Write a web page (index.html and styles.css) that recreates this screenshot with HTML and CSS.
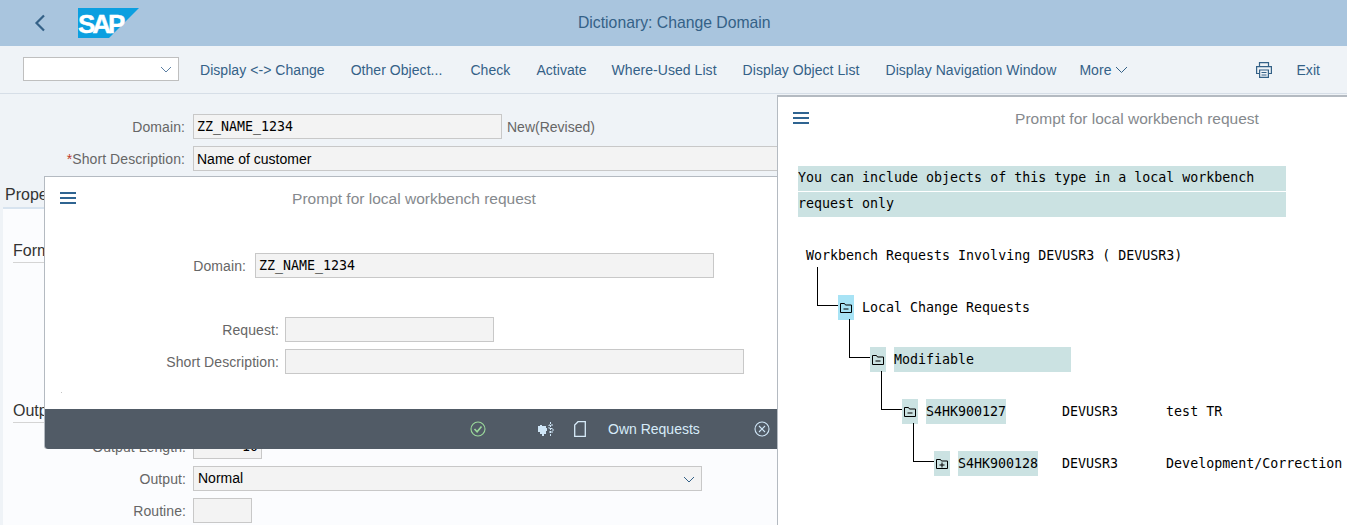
FILE: index.html
```html
<!DOCTYPE html>
<html lang="en">
<head>
    <meta charset="UTF-8">
    <meta name="viewport" content="width=device-width, initial-scale=1.0">
    <title>Dictionary: Change Domain</title>
    <link rel="stylesheet" href="styles.css">
</head>
<body>
    <header class="shell-bar">
        <svg class="back-icon" width="12" height="18" viewBox="0 0 12 18"><path d="M10 1.5 2.5 9l7.5 7.5" fill="none" stroke="#346187" stroke-width="2.2"/></svg>
        <svg class="sap-logo" width="61" height="30" viewBox="0 0 61 30">
            <polygon points="0,0 61,0 31,30 0,30" fill="#0b9fe0"/>
            <text x="0" y="25" class="sap-text">SAP</text>
        </svg>
        <div class="shell-title">Dictionary: Change Domain</div>
    </header>

    <nav class="toolbar">
        <div class="select toolbar-select">
            <svg class="chevron" width="12" height="7" viewBox="0 0 12 7"><path d="M1 1l5 5 5-5" fill="none" stroke="#5b7fa3" stroke-width="1"/></svg>
        </div>
        <a class="tool first">Display &lt;-&gt; Change</a>
        <a class="tool">Other Object...</a>
        <a class="tool tool-check">Check</a>
        <a class="tool">Activate</a>
        <a class="tool tool-where">Where-Used List</a>
        <a class="tool">Display Object List</a>
        <a class="tool">Display Navigation Window</a>
        <a class="tool more">More
            <svg width="13" height="8" viewBox="0 0 13 8"><path d="M1 1l5.5 5.5L12 1" fill="none" stroke="#346187" stroke-width="1"/></svg>
        </a>
        <svg class="print-icon" width="16" height="16" viewBox="0 0 16 16" fill="none" stroke="#346187" stroke-width="1.2">
            <path d="M3.5 4.5V.6h9v3.9"/>
            <path d="M3.5 11.5H.6V4.6h14.8v6.9h-2.9"/>
            <path d="M3.6 8h8.8v7.4H3.6z"/>
            <path d="M5.5 10.5h5M5.5 13h5"/>
        </svg>
        <a class="tool exit">Exit</a>
    </nav>

    <main class="page">
        <div class="form-row top-row first-row">
            <label class="label">Domain:</label>
            <div class="field mono domain-field">ZZ_NAME_1234</div>
            <span class="status">New(Revised)</span>
        </div>
        <div class="form-row top-row">
            <label class="label"><span class="req">*</span>Short Description:</label>
            <div class="field desc-field">Name of customer</div>
        </div>

        <div class="tab">Properties</div>
        <section class="panel">
            <h2 class="group format-group">Format</h2>
            <h2 class="group output-group">Output Characteristics</h2>
            <div class="form-row">
                <label class="label">Output Length:</label>
                <div class="field mono length-field">10</div>
            </div>
            <div class="form-row">
                <label class="label">Output:</label>
                <div class="field output-field">Normal
                    <svg class="chevron" width="12" height="7" viewBox="0 0 12 7"><path d="M1 1l5 5 5-5" fill="none" stroke="#346187" stroke-width="1"/></svg>
                </div>
            </div>
            <div class="form-row">
                <label class="label">Routine:</label>
                <div class="field routine-field"></div>
            </div>
        </section>
    </main>

    <!-- left popup -->
    <section class="dialog dialog-domain">
        <div class="dialog-head">
            <svg class="menu-icon" width="16" height="12" viewBox="0 0 16 12"><path d="M0 1h16M0 6h16M0 11h16" stroke="#2f6491" stroke-width="2"/></svg>
            <div class="dialog-title">Prompt for local workbench request</div>
        </div>
        <div class="dialog-form">
            <div class="dialog-row row-domain">
                <label class="label">Domain:</label>
                <div class="field mono">ZZ_NAME_1234</div>
            </div>
            <div class="dialog-row row-request">
                <label class="label">Request:</label>
                <div class="field"></div>
            </div>
            <div class="dialog-row row-short">
                <label class="label">Short Description:</label>
                <div class="field"></div>
            </div>
            <i class="speck"></i>
        </div>
        <footer class="dialog-foot">
            <svg class="foot-check" width="16" height="16" viewBox="0 0 16 16" fill="none" stroke="#9bd99b" stroke-width="1.1"><circle cx="8" cy="8" r="7"/><path d="M4.5 8l2.6 2.8 4.4-5.4" stroke-width="1.6"/></svg>
            <svg class="foot-tool" width="16" height="15" viewBox="0 0 16 15"><path d="M0 4h2V3h2v1h4v2h1v3H8v3H6v2H4v-2H2v-2H0z" fill="#cfe6f7"/><path d="M12.5 0v14M15 3h-4v3.5h4V10h-4" fill="none" stroke="#cfe6f7" stroke-width="1" stroke-dasharray="2 1"/></svg>
            <svg class="foot-doc" width="12" height="16" viewBox="0 0 12 16"><path d="M4 .7h7.3v14.6H.7V4z" fill="none" stroke="#d7ebf9" stroke-width="1.3"/></svg>
            <span class="foot-label">Own Requests</span>
            <svg class="foot-close" width="16" height="16" viewBox="0 0 16 16" fill="none" stroke="#cfe6f7" stroke-width="1.1"><circle cx="8" cy="8" r="7"/><path d="M5 5l6 6M11 5l-6 6"/></svg>
        </footer>
    </section>

    <!-- right popup -->
    <section class="dialog dialog-request">
        <div class="dialog-head">
            <svg class="menu-icon" width="16" height="12" viewBox="0 0 16 12"><path d="M0 1h16M0 6h16M0 11h16" stroke="#2f6491" stroke-width="2"/></svg>
            <div class="dialog-title">Prompt for local workbench request</div>
        </div>
        <div class="list mono">
            <div class="message">You can include objects of this type in a local workbench</div>
            <div class="message">request only</div>

            <div class="tree-row tree-root">Workbench Requests Involving DEVUSR3 ( DEVUSR3)</div>

            <div class="tree-row level-1">
                <span class="node node-active">
                    <i class="elbow"></i>
                    <svg width="12" height="10" viewBox="0 0 12 10" fill="none" stroke="#000"><path d="M.5 9.5v-9h4l1 1.5h6v7.5zM3.5 6h5"/></svg>
                </span>
                <span class="node-text">Local Change Requests</span>
            </div>
            <div class="tree-row level-2">
                <span class="node">
                    <i class="elbow"></i>
                    <svg width="12" height="10" viewBox="0 0 12 10" fill="none" stroke="#000"><path d="M.5 9.5v-9h4l1 1.5h6v7.5zM3.5 6h5"/></svg>
                </span>
                <span class="node-text hl wide">Modifiable</span>
            </div>
            <div class="tree-row level-3">
                <span class="node">
                    <i class="elbow"></i>
                    <svg width="12" height="10" viewBox="0 0 12 10" fill="none" stroke="#000"><path d="M.5 9.5v-9h4l1 1.5h6v7.5zM3.5 6h5"/></svg>
                </span>
                <span class="node-text hl">S4HK900127</span>
                <span class="owner owner-3">DEVUSR3</span>
                <span class="req-text">test TR</span>
            </div>
            <div class="tree-row level-4">
                <span class="node">
                    <i class="elbow"></i>
                    <svg width="12" height="10" viewBox="0 0 12 10" fill="none" stroke="#000"><path d="M.5 9.5v-9h4l1 1.5h6v7.5zM3.5 6h5M6 3.5v5"/></svg>
                </span>
                <span class="node-text hl">S4HK900128</span>
                <span class="owner owner-4">DEVUSR3</span>
                <span class="req-text">Development/Correction</span>
            </div>
        </div>
    </section>
</body>
</html>
```
FILE: styles.css
```css
html, body {
    height: 525px;
    overflow: hidden;
}
body {
    font-family: "Liberation Sans", Arial, sans-serif;
    font-size: 14px;
    background-color: #eff3f7;
    color: #333;
    margin: 0;
    position: relative;
}
.mono {
    font-family: "DejaVu Sans Mono", monospace;
    font-size: 13.3px;
    color: #000;
}

/* shell header */
.shell-bar {
    height: 46px;
    background-color: #a9c5de;
    display: flex;
    align-items: center;
    position: relative;
}
.back-icon {
    margin-left: 34px;
}
.sap-logo {
    margin-left: 32px;
}
.sap-text {
    font-family: "Liberation Sans", Arial, sans-serif;
    font-weight: bold;
    font-size: 26px;
    letter-spacing: -3px;
    fill: #fff;
    stroke: #fff;
    stroke-width: 0.4px;
}
.shell-title {
    margin-left: 439px;
    font-size: 15.75px;
    color: #346187;
}

/* toolbar */
.toolbar {
    height: 47px;
    border-bottom: 1px solid #d6dee7;
    display: flex;
    align-items: center;
    padding-left: 23px;
    padding-right: 27px;
    box-sizing: content-box;
}
.select {
    background-color: #fff;
    border: 1px solid #bfbfbf;
    box-sizing: border-box;
    position: relative;
}
.toolbar-select {
    width: 156px;
    height: 24px;
    margin-bottom: 2px;
}
.chevron {
    position: absolute;
    right: 6px;
    top: 50%;
    margin-top: -3px;
}
.tool {
    color: #346187;
    margin-left: 26px;
    white-space: nowrap;
    letter-spacing: 0.05px;
}
.tool.first {
    margin-left: 21px;
}
.tool.tool-check {
    margin-left: 28px;
}
.tool.tool-where {
    margin-left: 25px;
}
.tool.more {
    margin-left: 23px;
    display: flex;
    align-items: center;
    gap: 4px;
}
.print-icon {
    margin-left: auto;
}
.tool.exit {
    margin-left: 24px;
}

/* page behind the popups */
.page {
    padding-top: 20px;
}
.form-row {
    display: flex;
    align-items: center;
    height: 25px;
    margin-bottom: 7px;
}
.label {
    color: #666;
    text-align: right;
    white-space: nowrap;
    letter-spacing: 0.08px;
}
.form-row .label {
    width: 185px;
    margin-right: 8px;
}
.req {
    color: #c0392b;
}
.field {
    height: 25px;
    line-height: 23px;
    box-sizing: border-box;
    border: 1px solid #c8c8c8;
    background-color: #f3f3f3;
    padding: 0 3px;
    color: #000;
    position: relative;
}
.domain-field {
    width: 309px;
}
.status {
    margin-left: 5px;
    color: #666;
}
.desc-field {
    width: 700px;
    line-height: 25px;
}
.tab {
    margin: 13px 0 0 5px;
    width: 100px;
    height: 23px;
    font-size: 16px;
    line-height: 22px;
}
.panel {
    margin-left: 3px;
    padding-top: 31px;
    height: 320px;
    box-sizing: border-box;
    background-color: #fbfcfe;
    border-top: 2px solid #d7e3ef;
}
.group {
    font-size: 16px;
    font-weight: normal;
    margin: 0 0 0 10px;
    height: 22px;
    line-height: 22px;
    width: 400px;
    border-bottom: 1px solid #d4d4d4;
    box-sizing: content-box;
}
.format-group {
    margin-bottom: 137px;
}
.output-group {
    margin-bottom: 11px;
}
.panel .label {
    width: 183px;
    margin-right: 7px;
}
.length-field {
    width: 69px;
    text-align: right;
}
.output-field {
    width: 509px;
    font-size: 14px;
    padding-left: 4px;
}
.routine-field {
    width: 59px;
}

/* popups, placed like windows on a desktop */
.dialog {
    position: absolute;
    background-color: #fff;
    box-sizing: border-box;
}
.dialog-domain {
    left: 44px;
    top: 176px;
    width: 734px;
    height: 273px;
    border-left: 1px solid #b4bac1;
    border-top: 1px solid #b4bac1;
    display: flex;
    flex-direction: column;
    border-bottom-left-radius: 3px;
}
.dialog-request {
    left: 777px;
    top: 95px;
    width: 570px;
    height: 430px;
    border-left: 1px solid #b4bac1;
    border-top: 2px solid #b4bac1;
}
.dialog-head {
    height: 44px;
    display: flex;
    align-items: center;
    justify-content: center;
    position: relative;
}
.menu-icon {
    position: absolute;
    left: 15px;
    top: 15px;
}
.dialog-title {
    font-size: 15.5px;
    color: #85898d;
}
.dialog-domain .dialog-title {
    margin-left: 5px;
}
.dialog-request .dialog-title {
    margin-left: 149px;
}

/* left popup form */
.dialog-form {
    flex: 1;
    padding-top: 32px;
    position: relative;
}
.speck {
    position: absolute;
    left: 16px;
    bottom: 16px;
    width: 1px;
    height: 1px;
    background-color: #c4c4c4;
}
.dialog-row {
    display: flex;
    align-items: center;
    height: 25px;
}
.row-domain .label {
    width: 201px;
    margin-right: 9px;
}
.row-domain .field {
    width: 459px;
}
.row-request {
    margin-top: 39px;
}
.row-short {
    margin-top: 7px;
}
.row-request .label,
.row-short .label {
    width: 234px;
    margin-right: 6px;
}
.row-request .field {
    width: 209px;
}
.row-short .field {
    width: 459px;
}
.dialog-foot {
    height: 40px;
    background-color: #515b66;
    display: flex;
    align-items: center;
    padding-left: 425px;
    border-bottom-left-radius: 3px;
}
.foot-tool {
    margin-left: 52px;
}
.foot-doc {
    margin-left: 20px;
}
.foot-label {
    margin-left: 22px;
    color: #d7ebf9;
}
.foot-close {
    margin-left: 54px;
}

/* right popup list */
.list {
    padding-top: 25px;
}
.message {
    margin-left: 20px;
    width: 488px;
    height: 25px;
    line-height: 23px;
    margin-bottom: 1px;
    background-color: #cbe2e2;
    white-space: pre;
}
.tree-row {
    display: flex;
    align-items: center;
    height: 25px;
    margin-top: 27px;
    margin-left: 28px;
    white-space: pre;
}
.tree-root {
    margin-top: 26px;
}
.level-1 {
    padding-left: 32px;
}
.level-2 {
    padding-left: 64px;
}
.level-3 {
    padding-left: 96px;
}
.level-4 {
    padding-left: 128px;
}
.node {
    width: 16px;
    height: 25px;
    background-color: #cbe2e2;
    display: flex;
    align-items: center;
    justify-content: center;
    position: relative;
}
.node-active {
    background-color: #a8e3f5;
}
.elbow {
    position: absolute;
    right: 16px;
    bottom: 14px;
    width: 20px;
    height: 38px;
    border-left: 1px solid #000;
    border-bottom: 1px solid #000;
}
.node-text {
    margin-left: 8px;
    height: 25px;
    line-height: 26px;
}
.hl {
    background-color: #cbe2e2;
}
.wide {
    width: 177px;
}
.owner-3 {
    margin-left: 56px;
}
.owner-4 {
    margin-left: 24px;
}
.req-text {
    margin-left: 48px;
}
```
